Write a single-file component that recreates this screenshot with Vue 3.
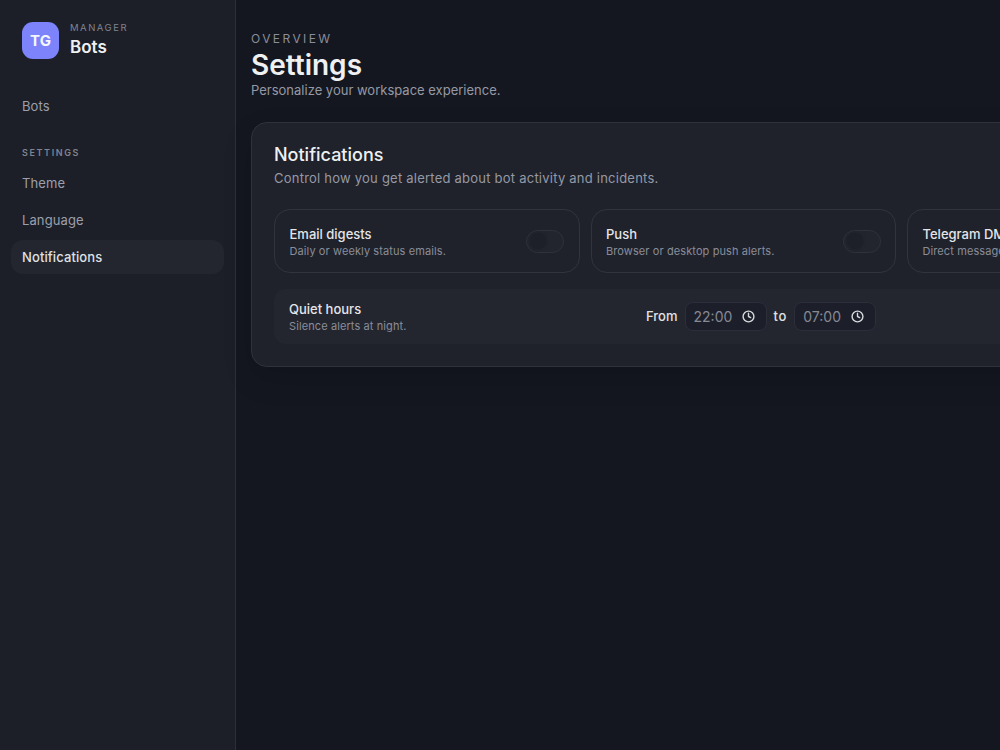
<template>
  <div class="app-shell">
    <aside class="sidebar">
      <div class="brand">
        <div class="brand-logo">TG</div>
        <div class="brand-text">
          <span class="brand-kicker">MANAGER</span>
          <span class="brand-name">Bots</span>
        </div>
      </div>

      <nav class="nav">
        <a class="nav-item">Bots</a>
        <div class="nav-label">SETTINGS</div>
        <a
          v-for="item in settingsItems"
          :key="item"
          :class="['nav-item', { active: item === 'Notifications' }]"
        >{{ item }}</a>
      </nav>
    </aside>

    <main class="main">
      <header class="page-header">
        <div class="eyebrow">OVERVIEW</div>
        <h1 class="page-title">Settings</h1>
        <p class="page-subtitle">Personalize your workspace experience.</p>
      </header>

      <section class="panel">
        <h2 class="panel-title">Notifications</h2>
        <p class="panel-subtitle">Control how you get alerted about bot activity and incidents.</p>

        <div class="channels">
          <div v-for="channel in channels" :key="channel.name" class="channel">
            <div class="row-text">
              <div class="row-title">{{ channel.name }}</div>
              <div class="row-desc">{{ channel.desc }}</div>
            </div>
            <span class="toggle"><span class="toggle-knob"></span></span>
          </div>
        </div>

        <div class="quiet-hours">
          <div class="row-text">
            <div class="row-title">Quiet hours</div>
            <div class="row-desc">Silence alerts at night.</div>
          </div>
          <div class="quiet-range">
            <span class="range-label">From</span>
            <div class="time-input">
              <span>22:00</span>
              <svg width="13" height="13" viewBox="0 0 24 24" fill="none" stroke="currentColor" stroke-width="2.6" stroke-linecap="round" stroke-linejoin="round">
                <circle cx="12" cy="12" r="10" />
                <path d="M12 6v6l4 2" />
              </svg>
            </div>
            <span class="range-label range-to">to</span>
            <div class="time-input">
              <span>07:00</span>
              <svg width="13" height="13" viewBox="0 0 24 24" fill="none" stroke="currentColor" stroke-width="2.6" stroke-linecap="round" stroke-linejoin="round">
                <circle cx="12" cy="12" r="10" />
                <path d="M12 6v6l4 2" />
              </svg>
            </div>
          </div>
        </div>
      </section>
    </main>
  </div>
</template>

<script setup>
const settingsItems = ['Theme', 'Language', 'Notifications'];

const channels = [
  { name: 'Email digests', desc: 'Daily or weekly status emails.' },
  { name: 'Push', desc: 'Browser or desktop push alerts.' },
  { name: 'Telegram DMs', desc: 'Direct messages from your bot.' }
];
</script>

<style>
html,
body {
  margin: 0;
  background: #141720;
  overflow: hidden;
}
</style>

<style scoped>
.app-shell {
  display: flex;
  width: 1000px;
  height: 750px;
  overflow: hidden;
  background: #141720;
  font-family: Inter, "Noto Sans", sans-serif;
  color: #f2f3f5;
}

.sidebar {
  flex: 0 0 236px;
  box-sizing: border-box;
  padding: 22px 11px;
  background: #1c1f28;
  border-right: 1px solid #2c2f3a;
}

.brand {
  display: flex;
  align-items: center;
  gap: 11px;
  padding: 0 11px;
}

.brand-logo {
  width: 37px;
  height: 37px;
  border-radius: 11px;
  background: #7c83fb;
  color: #f5f6ff;
  font-size: 15px;
  font-weight: 700;
  display: flex;
  align-items: center;
  justify-content: center;
}

.brand-text {
  display: flex;
  flex-direction: column;
  gap: 3px;
  padding-bottom: 2px;
}

.brand-kicker {
  font-size: 9.5px;
  line-height: 12px;
  letter-spacing: 0.16em;
  color: #80838f;
}

.brand-name {
  font-size: 17px;
  line-height: 20px;
  font-weight: 600;
  color: #eff0f2;
}

.nav {
  display: flex;
  flex-direction: column;
  gap: 3px;
  margin-top: 30px;
}

.nav-item {
  height: 34px;
  line-height: 34px;
  padding: 0 11px;
  border-radius: 12px;
  font-size: 13px;
  letter-spacing: 0.1px;
  color: #9c9fab;
}

.nav-item.active {
  background: #24262f;
  color: #dfe0e4;
  font-weight: 500;
}

.nav-label {
  margin-top: 21px;
  margin-bottom: 4px;
  padding: 0 11px;
  font-size: 9px;
  line-height: 12px;
  font-weight: 600;
  letter-spacing: 0.18em;
  color: #80838f;
}

.main {
  flex: 0 0 auto;
  padding: 31px 15px;
}

.eyebrow {
  font-size: 12px;
  line-height: 16px;
  letter-spacing: 0.2em;
  color: #8a8d99;
}

.page-title {
  margin: 2px 0 0;
  font-size: 28px;
  line-height: 33px;
  font-weight: 600;
  color: #eff0f2;
}

.page-subtitle {
  margin: 0;
  font-size: 13px;
  line-height: 16px;
  color: #9699a5;
}

.panel {
  box-sizing: border-box;
  width: 986px;
  height: 245px;
  margin-top: 24px;
  padding: 21px 22px;
  background: #1f222b;
  border: 1px solid #2f323d;
  border-radius: 16px;
  box-shadow: 0 12px 30px rgba(0, 0, 0, 0.14);
}

.panel-title {
  margin: 0;
  font-size: 18px;
  line-height: 22px;
  font-weight: 500;
  color: #eff0f2;
}

.panel-subtitle {
  margin: 4px 0 0;
  font-size: 13px;
  line-height: 16px;
  letter-spacing: 0.23px;
  color: #9699a5;
}

.channels {
  display: grid;
  grid-template-columns: repeat(3, 305.5px);
  gap: 11px;
  margin-top: 23px;
}

.channel {
  box-sizing: border-box;
  height: 64px;
  padding: 0 14.5px;
  display: flex;
  align-items: center;
  justify-content: space-between;
  border: 1px solid #31343f;
  border-radius: 16px;
  white-space: nowrap;
}

.row-text {
  padding-top: 1px;
}

.row-title {
  font-size: 13px;
  line-height: 18px;
  font-weight: 500;
  color: #e4e5e8;
}

.row-desc {
  font-size: 11px;
  line-height: 16px;
  letter-spacing: 0.1px;
  color: #8a8d99;
}

.toggle {
  box-sizing: border-box;
  width: 38px;
  height: 23px;
  padding: 3px;
  border-radius: 12px;
  background: #22252e;
  border: 1px solid #2f323d;
  display: flex;
  align-items: center;
}

.toggle-knob {
  width: 16px;
  height: 16px;
  border-radius: 50%;
  background: #1d2029;
  box-shadow: 0 0 3px #1d2029;
}

.quiet-hours {
  display: grid;
  grid-template-columns: 357px 1fr;
  align-items: center;
  height: 55px;
  margin-top: 16px;
  padding: 0 15px;
  background: #24262f;
  border-radius: 12px;
}

.quiet-range {
  display: flex;
  align-items: center;
  gap: 7px;
}

.range-label {
  margin-bottom: 2px;
  font-size: 13px;
  font-weight: 500;
  color: #e0e1e5;
}

.range-to {
  letter-spacing: 0.8px;
}

.time-input {
  box-sizing: border-box;
  width: 82px;
  height: 29px;
  padding: 0 11px 0 8px;
  display: flex;
  align-items: center;
  justify-content: space-between;
  background: #1c1f29;
  border: 1px solid #2c2f3a;
  border-radius: 8px;
  font-size: 14px;
  color: #868995;
}

.time-input svg {
  color: #d8d9de;
}
</style>
